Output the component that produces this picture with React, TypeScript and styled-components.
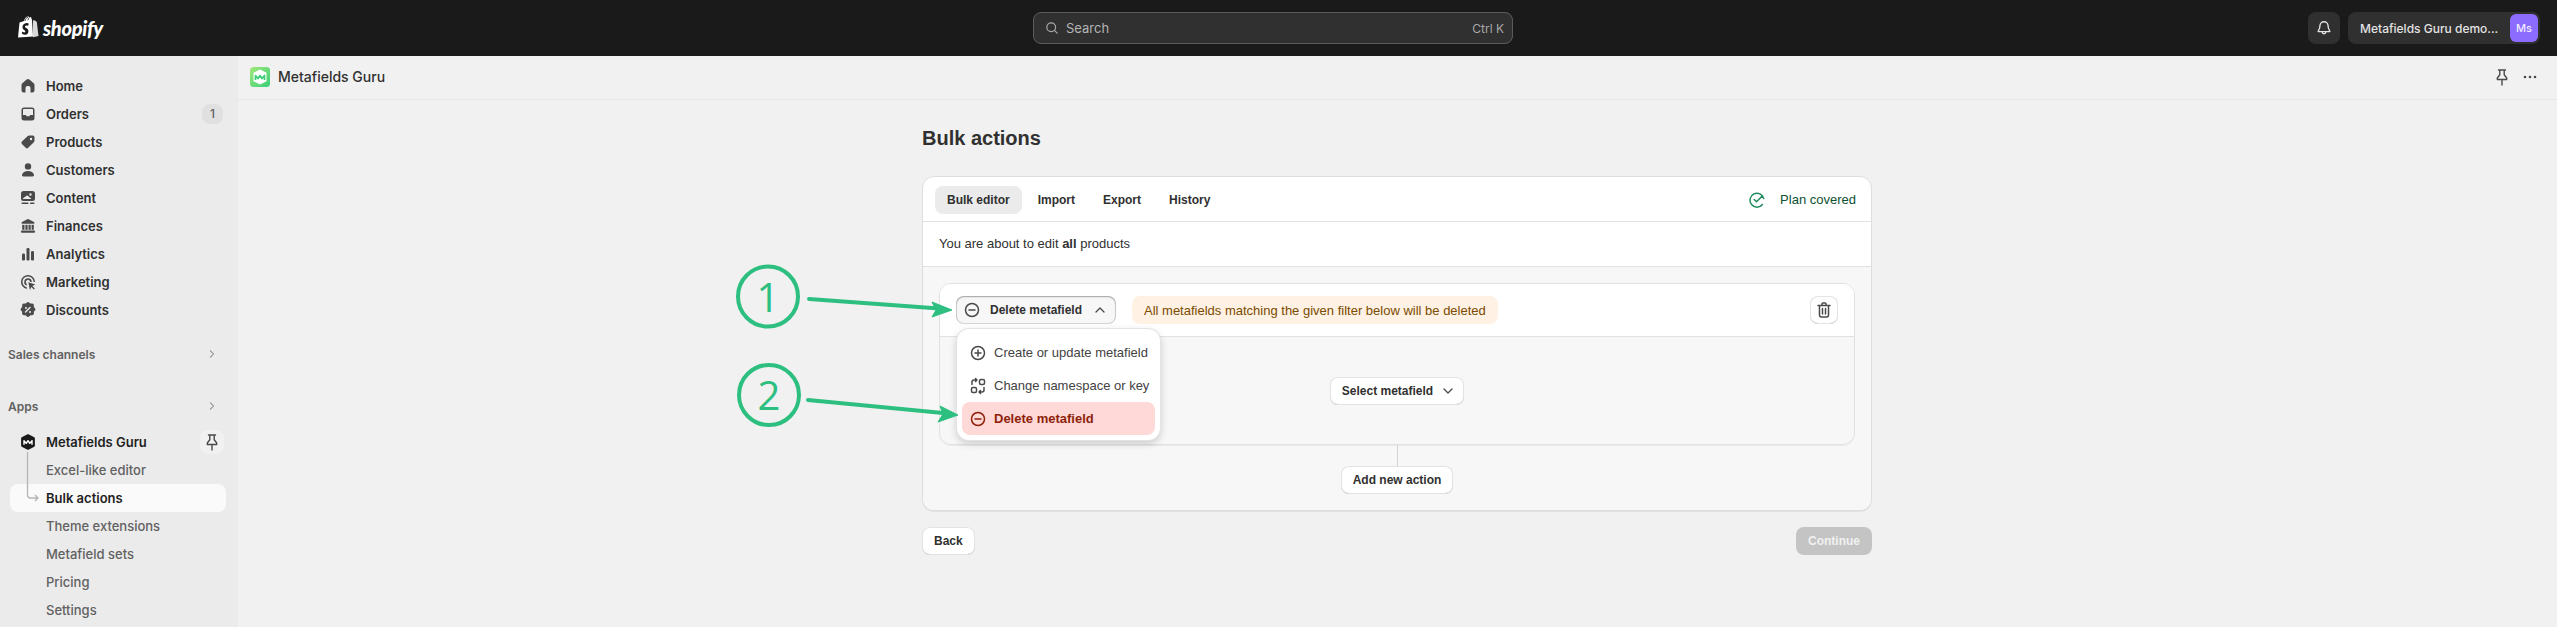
import React from 'react';
import styled, { createGlobalStyle } from 'styled-components';

const GlobalStyle = createGlobalStyle`
  html, body {
    margin: 0;
    height: 100%;
    overflow: hidden;
    background: #f1f1f1;
  }
  * { box-sizing: border-box; }
`;

const Page = styled.div`
  position: relative;
  width: 2557px;
  height: 627px;
  overflow: hidden;
  display: flex;
  flex-direction: column;
  font-family: 'Liberation Sans', Arial, sans-serif;
  color: #303030;
`;

/* top bar */
const TopBar = styled.header`
  flex: none;
  height: 56px;
  background: #1a1a1a;
  display: grid;
  grid-template-columns: 1015px 480px 1fr;
  align-items: center;
  padding: 0 17px 0 18px;
  font-family: Inter, sans-serif;
`;
const Brand = styled.div`
  display: flex;
  align-items: center;
  gap: 4px;
`;
const BrandName = styled.span`
  font-family: Lato, sans-serif;
  font-style: italic;
  font-weight: 900;
  font-size: 20px;
  letter-spacing: -0.3px;
  color: #fff;
  line-height: 24px;
`;
const SearchBox = styled.div`
  height: 32px;
  border: 1px solid #5c5c5c;
  border-radius: 8px;
  background: #303030;
  display: flex;
  align-items: center;
  gap: 6px;
  padding: 0 8px 0 10px;
  color: #b5b5b5;
  font-size: 13px;
`;
const SearchHint = styled.span`
  margin-left: auto;
  color: #a8a8a8;
  font-size: 12px;
`;
const TopRight = styled.div`
  display: flex;
  justify-content: flex-end;
  align-items: center;
  gap: 8px;
`;
const BellButton = styled.div`
  width: 32px;
  height: 32px;
  border-radius: 8px;
  background: #303030;
  display: grid;
  place-items: center;
`;
const Account = styled.div`
  width: 192px;
  height: 32px;
  border-radius: 8px;
  background: #303030;
  display: flex;
  align-items: center;
  justify-content: space-between;
  padding: 0 2px 0 12px;
  color: #e3e3e3;
  font-size: 12px;
  font-weight: 500;
`;
const Avatar = styled.span`
  width: 28px;
  height: 28px;
  border-radius: 6px;
  background: #8c6cff;
  color: #efeaff;
  display: grid;
  place-items: center;
  font-size: 11px;
  font-weight: 500;
`;

/* sidebar */
const Body = styled.div`
  flex: 1;
  display: flex;
  min-height: 0;
`;
const Sidebar = styled.nav`
  flex: none;
  width: 238px;
  background: #ebebeb;
  padding-top: 16px;
  font-family: Inter, sans-serif;
`;
const NavRow = styled.div<{ $active?: boolean; $sub?: boolean; $strong?: boolean }>`
  position: relative;
  height: 28px;
  margin: 0 12px 0 10px;
  padding: 0 8px 0 ${p => (p.$sub ? '36px' : '8px')};
  display: flex;
  align-items: center;
  gap: 8px;
  border-radius: 8px;
  font-size: 13px;
  font-weight: ${p => (p.$sub && !p.$active ? 450 : 600)};
  color: ${p => (p.$sub && !p.$active ? '#616161' : p.$active || p.$strong ? '#1f1f1f' : '#303030')};
  background: ${p => (p.$active ? '#fafafa' : 'transparent')};
`;
const Badge = styled.span`
  margin-left: auto;
  margin-right: -5px;
  margin-top: -1px;
  width: 21px;
  height: 20px;
  border-radius: 8px;
  background: #e0e0e0;
  color: #616161;
  font-size: 12px;
  font-weight: 500;
  display: grid;
  place-items: center;
`;
const SectionRow = styled.div<{ $gap: number }>`
  height: 28px;
  margin-top: ${p => p.$gap}px;
  padding: 0 18px 0 8px;
  display: flex;
  align-items: center;
  justify-content: space-between;
  font-size: 12px;
  font-weight: 600;
  color: #616161;
`;
const AppGroup = styled.div`
  position: relative;
  margin-top: 8px;
`;
const TreeLine = styled.svg`
  position: absolute;
  left: 26px;
  top: 24px;
`;
const PinButton = styled.span`
  position: absolute;
  right: 2px;
  top: 2px;
  width: 24px;
  height: 24px;
  border-radius: 8px;
  background: #f1f1f1;
  display: grid;
  place-items: center;
`;

/* main column */
const Main = styled.main`
  flex: 1;
  min-width: 0;
`;
const AppBar = styled.div`
  height: 44px;
  border-bottom: 1px solid #e6e6e6;
  padding: 0 17px 2px 12px;
  display: flex;
  align-items: center;
  gap: 8px;
  font-family: Inter, sans-serif;
  font-size: 14px;
  font-weight: 450;
`;
const AppBarTools = styled.div`
  margin-left: auto;
  display: flex;
  align-items: center;
  gap: 8px;
`;
const Content = styled.div`
  width: 950px;
  margin-left: 684px;
  padding-top: 26px;
`;
const Title = styled.h1`
  margin: 0 0 26px;
  font-size: 20px;
  line-height: 24px;
  font-weight: 700;
`;
const Card = styled.section`
  background: #fff;
  border: 1px solid #dedede;
  border-radius: 12px;
  overflow: hidden;
  box-shadow: 0 1px 0 rgba(0, 0, 0, 0.06);
`;
const Tabs = styled.div`
  height: 45px;
  border-bottom: 1px solid #e1e1e1;
  padding: 1px 15px 0 12px;
  display: flex;
  align-items: center;
  gap: 4px;
`;
const Tab = styled.div<{ $active?: boolean }>`
  height: 28px;
  padding: 0 12px;
  border-radius: 8px;
  background: ${p => (p.$active ? '#ebebeb' : 'transparent')};
  display: flex;
  align-items: center;
  font-size: 12px;
  font-weight: 700;
  color: #303030;
`;
const PlanStatus = styled.div`
  margin-left: auto;
  display: flex;
  align-items: center;
  gap: 13px;
  color: #0c5132;
  font-size: 13px;
`;
const Note = styled.div`
  height: 45px;
  border-bottom: 1px solid #e1e1e1;
  padding: 0 16px 1px;
  display: flex;
  align-items: center;
  font-size: 13px;
  white-space: pre;
`;
const Strong = styled.b`
  font-weight: 700;
`;
const Actions = styled.div`
  background: #f7f7f7;
  padding: 16px;
  display: flex;
  flex-direction: column;
  align-items: center;
`;
const ActionCard = styled.div`
  width: 100%;
  border: 1px solid #e1e1e1;
  border-radius: 12px;
  overflow: visible;
  box-shadow: 0 1px 0 rgba(0, 0, 0, 0.05);
`;
const ActionHeader = styled.div`
  height: 53px;
  border-bottom: 1px solid #e1e1e1;
  border-radius: 11px 11px 0 0;
  background: #fff;
  padding: 0 16px;
  display: flex;
  align-items: center;
  gap: 16px;
`;
const ActionBody = styled.div`
  height: 107px;
  padding-top: 1px;
  display: grid;
  place-items: center;
`;
const DropdownWrap = styled.div`
  position: relative;
`;
const Button = styled.button<{ $pressed?: boolean; $disabled?: boolean }>`
  height: 28px;
  border: 0;
  border-radius: 8px;
  padding: 0 12px;
  display: inline-flex;
  align-items: center;
  justify-content: center;
  gap: 8px;
  white-space: nowrap;
  font-family: inherit;
  font-size: 12px;
  font-weight: 700;
  color: ${p => (p.$disabled ? '#f1f1f1' : '#303030')};
  background: ${p => (p.$disabled ? '#c4c4c4' : p.$pressed ? '#f7f7f7' : '#fff')};
  box-shadow: ${p =>
    p.$disabled
      ? 'none'
      : p.$pressed
        ? 'inset 0 1px 2px rgba(0,0,0,.25), inset 0 0 0 1px #d8d8d8'
        : 'inset 0 0 0 1px #e3e3e3, inset 0 -1px 0 #b5b5b5'};
`;
const DeleteButton = styled(Button)`
  width: 160px;
  justify-content: flex-start;
  padding: 0 8px 0 6px;
  svg:last-child {
    margin-left: auto;
  }
`;
const SelectButton = styled(Button)`
  padding: 0 8px 0 12px;
  gap: 7px;
`;
const IconButton = styled(Button)`
  width: 28px;
  padding: 0;
  margin-left: auto;
`;
const Warning = styled.div`
  height: 28px;
  padding: 0 12px;
  border-radius: 8px;
  background: #fff1e3;
  color: #7a4b00;
  display: flex;
  align-items: center;
  font-size: 13px;
`;
const Menu = styled.div`
  position: absolute;
  left: 1px;
  top: 33px;
  z-index: 2;
  width: 203px;
  height: 111px;
  padding: 7px 5px 5px;
  background: #fff;
  border-radius: 12px;
  box-shadow: 0 0 0 1px #e3e3e3, 0 3px 8px rgba(0, 0, 0, 0.2);
  display: flex;
  flex-direction: column;
`;
const MenuItem = styled.div<{ $danger?: boolean }>`
  flex: 1;
  display: flex;
  align-items: center;
  gap: 6px;
  padding: 0 6px;
  border-radius: 8px;
  font-size: 13px;
  white-space: nowrap;
  font-weight: ${p => (p.$danger ? 700 : 400)};
  color: ${p => (p.$danger ? '#8e1f0b' : '#424242')};
  background: ${p => (p.$danger ? '#fed9d7' : 'transparent')};
`;
const Connector = styled.div`
  width: 1px;
  height: 21px;
  background: #d4d4d4;
`;
const Footer = styled.div`
  margin-top: 16px;
  display: flex;
  justify-content: space-between;
`;
const Annotations = styled.svg`
  position: absolute;
  left: 0;
  top: 0;
  z-index: 3;
  pointer-events: none;
`;

/* icons */
type IconProps = { size?: number; color?: string };
const Ico = ({ size = 20, color = '#4a4a4a', children }: IconProps & { children: React.ReactNode }) => (
  <svg width={size} height={size} viewBox="0 0 20 20" fill={color} style={{ flex: 'none' }}>
    {children}
  </svg>
);
const Line = ({ size = 20, color = '#4a4a4a', w = 1.5, children }: IconProps & { w?: number; children: React.ReactNode }) => (
  <svg width={size} height={size} viewBox="0 0 20 20" fill="none" stroke={color} strokeWidth={w} strokeLinecap="round" strokeLinejoin="round" style={{ flex: 'none' }}>
    {children}
  </svg>
);

const HomeIcon = () => (
  <Ico><path fillRule="evenodd" d="M8.600 3.600a2.200 2.200 0 0 1 2.800 0l4 3.300c.7.500 1.100 1.300 1.100 2.200v5.200a2.200 2.200 0 0 1-2.200 2.200h-1.800V12a2 2 0 0 0-2-2h-1a2 2 0 0 0-2 2v4.500H5.700a2.200 2.200 0 0 1-2.200-2.200V9.100c0-.9.400-1.700 1.100-2.200z" /></Ico>
);
const OrdersIcon = () => (
  <Ico><path fillRule="evenodd" d="M6 3.500h8A2.500 2.500 0 0 1 16.500 6v8a2.500 2.500 0 0 1-2.500 2.500H6A2.500 2.500 0 0 1 3.500 14V6A2.500 2.500 0 0 1 6 3.500zM5.800 5a.8.8 0 0 0-.8.8V11h2.400c.5 0 .8.300 1 .7l.3.600h2.600l.3-.6c.2-.4.500-.7 1-.7H15V5.800a.8.8 0 0 0-.8-.8z" /></Ico>
);
const TagIcon = () => (
  <Ico><path fillRule="evenodd" d="M11.400 3.500h3.300a1.800 1.800 0 0 1 1.800 1.800v3.300c0 .6-.2 1.200-.7 1.600l-5.600 5.600a1.800 1.800 0 0 1-2.500 0l-3.800-3.800a1.800 1.800 0 0 1 0-2.500l5.900-5.500c.4-.3.900-.5 1.600-.5zM13 8.200a1.200 1.200 0 1 0 0-2.400 1.200 1.200 0 0 0 0 2.400z" /></Ico>
);
const PersonIcon = () => (
  <Ico><circle cx="10" cy="6.400" r="3.200" /><path d="M10 11c-3 0-5.500 1.500-6 3.800-.2 1 .5 1.700 1.400 1.700h9.200c.9 0 1.600-.7 1.400-1.700-.5-2.300-3-3.800-6-3.800z" /></Ico>
);
const ContentIcon = () => (
  <Ico><path fillRule="evenodd" d="M5.500 3h9A2.500 2.500 0 0 1 17 5.500v5a2.500 2.500 0 0 1-2.500 2.500h-9A2.500 2.500 0 0 1 3 10.500v-5A2.500 2.500 0 0 1 5.500 3zm7 2.300a1.200 1.200 0 1 0 0 2.400 1.200 1.200 0 0 0 0-2.400zM5 11h8.500L9.800 7.700a1 1 0 0 0-1.300 0L4.800 10.500z" /><rect x="3.500" y="14.600" width="7" height="1.500" rx=".7" /><rect x="12" y="14.600" width="4.500" height="1.500" rx=".7" /></Ico>
);
const BankIcon = () => (
  <Ico><path d="M9.300 3.200a1.500 1.500 0 0 1 1.400 0l5.300 2.700c.9.500.6 1.800-.4 1.800H4.400c-1 0-1.300-1.300-.4-1.800z" /><rect x="4.200" y="8.800" width="2.300" height="5" /><rect x="7.400" y="8.800" width="2.200" height="5" /><rect x="10.500" y="8.800" width="2.200" height="5" /><rect x="13.600" y="8.800" width="2.200" height="5" /><rect x="3" y="14.500" width="14" height="2.200" rx=".8" /></Ico>
);
const BarsIcon = () => (
  <Ico><rect x="4" y="9.500" width="3" height="7" rx="1.200" /><rect x="8.500" y="4" width="3" height="12.500" rx="1.200" /><rect x="13" y="7" width="3" height="9.500" rx="1.200" /></Ico>
);
const TargetIcon = () => (
  <Ico><path d="M10 3a7 7 0 0 0-1.200 13.900v-1.600A5.500 5.500 0 1 1 15.500 10h1.500A7 7 0 0 0 10 3z" /><path d="M10 6.200a3.800 3.800 0 0 0-1.200 7.400v-1.700A2.200 2.200 0 1 1 12.200 10h1.600A3.800 3.800 0 0 0 10 6.200z" /><path d="M10.300 10.300l7 2.300-2.900 1.500 2.400 2.400-1 1-2.400-2.400-1.500 2.900z" /></Ico>
);
const DiscountIcon = () => (
  <Ico><path fillRule="evenodd" d="M8.600 2.700a2 2 0 0 1 2.800 0l1 .9 1.400-.1a2 2 0 0 1 2.100 2.100l-.1 1.400 1 1a2 2 0 0 1 0 2.800l-1 1 .1 1.400a2 2 0 0 1-2.100 2.100l-1.400-.1-1 1a2 2 0 0 1-2.800 0l-1-1-1.400.1a2 2 0 0 1-2.100-2.100l.1-1.400-1-1a2 2 0 0 1 0-2.800l1-1-.1-1.400a2 2 0 0 1 2.100-2.100l1.400.1zM12.500 7a.7.7 0 0 0-1 0L7 11.500a.7.7 0 0 0 1 1L12.500 8a.7.7 0 0 0 0-1zM8 7a1 1 0 1 0 0 2 1 1 0 0 0 0-2zm4 4a1 1 0 1 0 0 2 1 1 0 0 0 0-2z" /></Ico>
);
const ChevronRight = () => (
  <Line size={16} color="#8a8a8a" w={1.3}><path d="M8 6l4 4-4 4" /></Line>
);
const PinIcon = ({ color = '#4a4a4a' }: IconProps) => (
  <Line color={color} size={20} w={1.4}><path d="M6.500 3h7M7.800 3v4.800L5.300 11v1.500h9.400V11l-2.500-3.200V3M10 12.500V18" /></Line>
);
const MinusCircle = ({ color = '#4a4a4a' }: IconProps) => (
  <Line color={color}><circle cx="10" cy="10" r="6.500" /><path d="M7 10h6" /></Line>
);
const PlusCircle = () => (
  <Line><circle cx="10" cy="10" r="6.500" /><path d="M7 10h6M10 7v6" /></Line>
);
const SwapIcon = () => (
  <Line>
    <rect x="11.500" y="3.500" width="5" height="5" rx="1.500" />
    <rect x="3.500" y="11.500" width="5" height="5" rx="1.500" />
    <path d="M4 8.500V6a2 2 0 0 1 2-2h3M7.500 2.500 9 4 7.500 5.500M16 11.500V14a2 2 0 0 1-2 2h-3M12.500 17.500 11 16l1.500-1.500" />
  </Line>
);
const TrashIcon = () => (
  <Line><path d="M8 4.500V4a1 1 0 0 1 1-1h2a1 1 0 0 1 1 1v.500M4 5.500h12M5.500 5.500V15a2 2 0 0 0 2 2h5a2 2 0 0 0 2-2V5.500M8.500 8.500v5.500M11.500 8.500v5.500" /></Line>
);
const CheckCircle = () => (
  <Line color="#1f8a5b" size={20}><path d="M16.800 8.500A7 7 0 1 0 15.500 14.500M7.200 9.500l2.300 2.300 6-6" /></Line>
);
const ChevronV = ({ up }: { up?: boolean }) => (
  <Line size={16} color="#4a4a4a" w={1.6}><path d={up ? 'M5 12.500l5-5 5 5' : 'M5 7.500l5 5 5-5'} /></Line>
);
const SearchIcon = () => (
  <Line size={16} color="#a8a8a8"><circle cx="9" cy="9" r="5.500" /><path d="M13 13l3.500 3.500" /></Line>
);
const BellIcon = () => (
  <Line size={18} color="#e3e3e3"><path d="M10 3a4.500 4.500 0 0 0-4.500 4.500c0 3.500-2 5.500-2 6.500h13c0-1-2-3-2-6.500A4.500 4.500 0 0 0 10 3zM8 14.500a2 2 0 0 0 4 0" /></Line>
);
const DotsIcon = () => (
  <Ico size={20} color="#4a4a4a"><circle cx="5" cy="10" r="1.300" /><circle cx="10" cy="10" r="1.300" /><circle cx="15" cy="10" r="1.300" /></Ico>
);
const ShopifyBag = () => (
  <svg width="21" height="24" viewBox="0 0 21 24" style={{ flex: 'none' }}>
    <path fill="#fff" d="M1.500 6.500 6 5C6.500 2.500 8.200.5 10 .5c.8 0 1.300.3 1.700.9l1.300-.3c.6 1.600.9 2.700 1 3.200L15 20.500 0 21.500z" />
    <path fill="#d8d8d8" d="M15 4.300l2 .1 1.800 1.700L20.500 20l-5.500 1.300z" />
    <path fill="none" stroke="#1a1a1a" strokeWidth=".8" d="M7 5c.3-2 1.500-3.500 3-3.800M10 4.300c.1-1.300.5-2.300 1.300-2.900" />
    <path fill="#1a1a1a" d="M10.800 7.700l-.7 2.100s-.8-.4-1.700-.3c-1.400.1-1.400 1-1.400 1.200.1 1.200 3.200 1.500 3.400 4.300.1 2.200-1.200 3.700-3.100 3.800-2.300.2-3.500-1.200-3.500-1.200l.5-2s1.200.9 2.200.9c.6 0 .9-.5.8-.9-.1-1.600-2.600-1.500-2.800-4C4.300 9.200 5.700 7 8.900 6.900c1.200-.1 1.900.8 1.900.8z" />
  </svg>
);
const AppLogoGreen = () => (
  <svg width="20" height="20" viewBox="0 0 20 20" style={{ flex: 'none' }}>
    <defs>
      <linearGradient id="appgrad" x1="0" y1="0" x2="1" y2="1">
        <stop offset="0" stopColor="#a4e87a" />
        <stop offset="1" stopColor="#36cf78" />
      </linearGradient>
    </defs>
    <rect width="20" height="20" rx="3.500" fill="url(#appgrad)" />
    <path d="M10 2.500l6.500 3.200v8.600L10 17.500l-6.500-3.200V5.700z" fill="#fff" />
    <path d="M5.500 13V8.500L8 11.500l2-3 2 3 2.500-3V13" fill="none" stroke="#3ccf78" strokeWidth="1.700" strokeLinejoin="round" />
  </svg>
);
const AppLogoDark = () => (
  <svg width="16" height="16" viewBox="0 0 18 18" style={{ flex: 'none', marginLeft: 2, marginRight: 2 }}>
    <path d="M9 1.500l6.500 3.200v8.600L9 16.500l-6.500-3.200V4.700z" fill="#1a1a1a" stroke="#1a1a1a" strokeWidth="2.500" strokeLinejoin="round" />
    <path d="M4.500 12V7.500L7 10.500l2-3 2 3 2.500-3V12" fill="none" stroke="#fff" strokeWidth="1.600" strokeLinejoin="round" />
  </svg>
);

const mainNav: [string, React.ReactNode][] = [
  ['Home', <HomeIcon />],
  ['Orders', <OrdersIcon />],
  ['Products', <TagIcon />],
  ['Customers', <PersonIcon />],
  ['Content', <ContentIcon />],
  ['Finances', <BankIcon />],
  ['Analytics', <BarsIcon />],
  ['Marketing', <TargetIcon />],
  ['Discounts', <DiscountIcon />],
];
const subNav = ['Excel-like editor', 'Bulk actions', 'Theme extensions', 'Metafield sets', 'Pricing', 'Settings'];

const GREEN = '#2dbf80';

const Callouts = () => (
  <Annotations width="2557" height="627">
    <circle cx="768" cy="296.500" r="30" fill="none" stroke={GREEN} strokeWidth="4" />
    <text x="768" y="312" textAnchor="middle" fontFamily="'Open Sans', sans-serif" fontSize="40" fill={GREEN}>1</text>
    <path d="M809 299l130 9.500" stroke={GREEN} strokeWidth="4" strokeLinecap="round" />
    <path d="M952 310l-20-8 4 8-4 7z" fill={GREEN} stroke={GREEN} strokeWidth="1" strokeLinejoin="round" />
    <circle cx="769" cy="395" r="30" fill="none" stroke={GREEN} strokeWidth="4" />
    <text x="769" y="410" textAnchor="middle" fontFamily="'Open Sans', sans-serif" fontSize="40" fill={GREEN}>2</text>
    <path d="M808 400l135 13" stroke={GREEN} strokeWidth="4" strokeLinecap="round" />
    <path d="M958 415l-18-9 3 8-5 8z" fill={GREEN} stroke={GREEN} strokeWidth="1" strokeLinejoin="round" />
  </Annotations>
);

const App = () => (
  <Page>
    <GlobalStyle />
    <TopBar>
      <Brand>
        <ShopifyBag />
        <BrandName>shopify</BrandName>
      </Brand>
      <SearchBox>
        <SearchIcon />
        Search
        <SearchHint>Ctrl K</SearchHint>
      </SearchBox>
      <TopRight>
        <BellButton><BellIcon /></BellButton>
        <Account>
          Metafields Guru demo...
          <Avatar>Ms</Avatar>
        </Account>
      </TopRight>
    </TopBar>
    <Body>
      <Sidebar>
        {mainNav.map(([label, icon]) => (
          <NavRow key={label}>
            {icon}
            {label}
            {label === 'Orders' && <Badge>1</Badge>}
          </NavRow>
        ))}
        <SectionRow $gap={16}>Sales channels <ChevronRight /></SectionRow>
        <SectionRow $gap={24}>Apps <ChevronRight /></SectionRow>
        <AppGroup>
          <NavRow $strong>
            <AppLogoDark />
            Metafields Guru
            <PinButton><PinIcon /></PinButton>
          </NavRow>
          {subNav.map(label => (
            <NavRow key={label} $sub $active={label === 'Bulk actions'}>{label}</NavRow>
          ))}
          <TreeLine width="14" height="50" viewBox="0 0 14 50" fill="none" stroke="#b5b5b5" strokeWidth="1.300">
            <path d="M1.500 0v43a3 3 0 0 0 3 3H12M9 43l3 3-3 3" />
          </TreeLine>
        </AppGroup>
      </Sidebar>
      <Main>
        <AppBar>
          <AppLogoGreen />
          Metafields Guru
          <AppBarTools>
            <PinIcon />
            <DotsIcon />
          </AppBarTools>
        </AppBar>
        <Content>
          <Title>Bulk actions</Title>
          <Card>
            <Tabs>
              <Tab $active>Bulk editor</Tab>
              <Tab>Import</Tab>
              <Tab>Export</Tab>
              <Tab>History</Tab>
              <PlanStatus><CheckCircle />Plan covered</PlanStatus>
            </Tabs>
            <Note>You are about to edit <Strong>all</Strong> products</Note>
            <Actions>
              <ActionCard>
                <ActionHeader>
                  <DropdownWrap>
                    <DeleteButton $pressed>
                      <MinusCircle />
                      Delete metafield
                      <ChevronV up />
                    </DeleteButton>
                    <Menu>
                      <MenuItem><PlusCircle />Create or update metafield</MenuItem>
                      <MenuItem><SwapIcon />Change namespace or key</MenuItem>
                      <MenuItem $danger><MinusCircle color="#8e1f0b" />Delete metafield</MenuItem>
                    </Menu>
                  </DropdownWrap>
                  <Warning>All metafields matching the given filter below will be deleted</Warning>
                  <IconButton><TrashIcon /></IconButton>
                </ActionHeader>
                <ActionBody>
                  <SelectButton>Select metafield <ChevronV /></SelectButton>
                </ActionBody>
              </ActionCard>
              <Connector />
              <Button>Add new action</Button>
            </Actions>
          </Card>
          <Footer>
            <Button>Back</Button>
            <Button $disabled>Continue</Button>
          </Footer>
        </Content>
      </Main>
    </Body>
    <Callouts />
  </Page>
);

export default App;
